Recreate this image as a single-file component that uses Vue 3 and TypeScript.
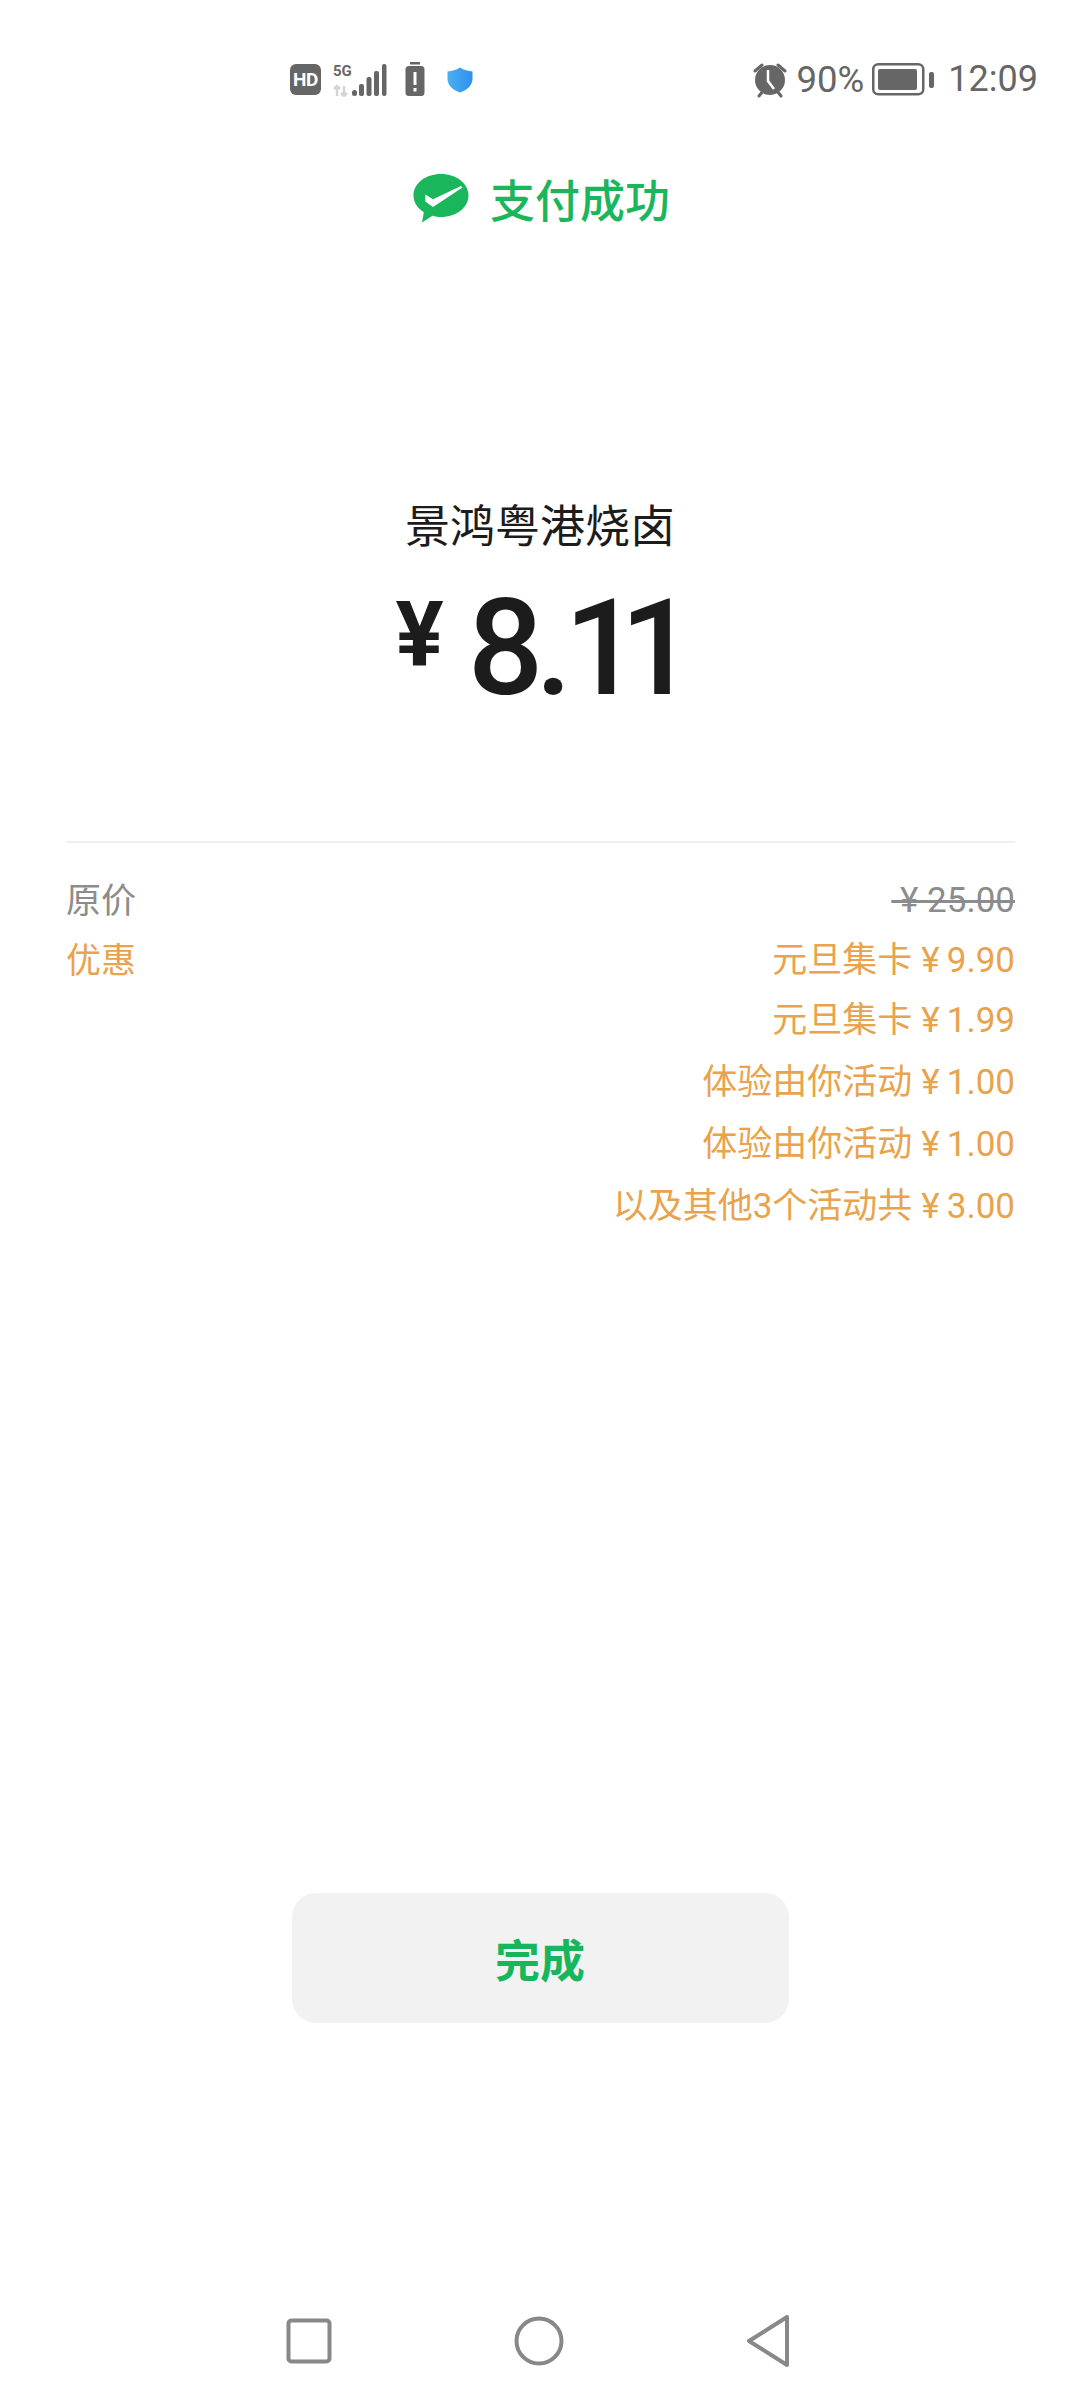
<script setup lang="ts">
interface Discount { name: string; amount: string; cls?: string }
const discounts: Discount[] = [
  { name: '元旦集卡', amount: '9.90' },
  { name: '元旦集卡', amount: '1.99' },
  { name: '体验由你活动', amount: '1.00', cls: 'loose' },
  { name: '体验由你活动', amount: '1.00', cls: 'loose' },
  { name: '以及其他3个活动共', amount: '3.00', cls: 'loose' },
]
</script>

<template>
  <div class="page">
    <header class="status">
      <div class="status-left">
        <span class="hd">HD</span>
        <svg class="signal" width="55" height="35" viewBox="0 0 55 35">
          <text x="0" y="14" class="five-g">5G</text>
          <path d="M4 24v10M1 27l3-3 3 3" stroke="#d4d4d4" stroke-width="2.5" fill="none" />
          <path d="M11 24v10M8 31l3 3 3-3" stroke="#d4d4d4" stroke-width="2.5" fill="none" />
          <rect x="19" y="28" width="5" height="6" rx="2.5" fill="#666" />
          <rect x="26" y="22" width="5" height="12" rx="2" fill="#666" />
          <rect x="33.500" y="15" width="5" height="19" rx="2" fill="#666" />
          <rect x="41" y="9" width="5" height="25" rx="2" fill="#666" />
          <rect x="49" y="2" width="4.500" height="32" rx="2" fill="#666" />
        </svg>
        <svg class="alert" width="20" height="35" viewBox="0 0 20 35">
          <rect x="5" y="0" width="10" height="2.500" fill="#666" />
          <rect x="0.500" y="4" width="19" height="30" rx="3.500" fill="#666" />
          <rect x="8.500" y="10" width="3" height="13" fill="#fff" />
          <rect x="8.500" y="26" width="3" height="3.500" fill="#fff" />
        </svg>
        <svg class="shield" width="26" height="26" viewBox="0 0 26 26">
          <defs>
            <linearGradient id="sg" x1="0" y1="0" x2="1" y2="0">
              <stop offset="0" stop-color="#4ab0f2" />
              <stop offset="1" stop-color="#2f8ff0" />
            </linearGradient>
          </defs>
          <path d="M13 0.500C17 3 21 4.200 25.500 4.500V12C25.500 18.500 19.500 23.500 13 25.500C6.500 23.500 0.500 18.500 0.500 12V4.500C5 4.200 9 3 13 0.500Z" fill="url(#sg)" />
        </svg>
      </div>
      <div class="status-right">
        <svg class="alarm" width="38" height="36" viewBox="0 0 38 36">
          <path d="M4 9L11 3M34 9L27 3" stroke="#666" stroke-width="3" fill="none" stroke-linecap="round" />
          <path d="M8 34l4-5M30 34l-4-5" stroke="#666" stroke-width="3" fill="none" stroke-linecap="round" />
          <circle cx="19" cy="18" r="15" fill="#666" />
          <path d="M17 8V19L23 27" stroke="#fff" stroke-width="2.500" fill="none" />
        </svg>
        <span class="pct">90%</span>
        <svg class="battery" width="62" height="33" viewBox="0 0 62 33">
          <rect x="1.250" y="1.250" width="50" height="30" rx="5" fill="none" stroke="#666" stroke-width="2.500" />
          <rect x="6" y="6" width="39" height="21" rx="2" fill="#666" />
          <rect x="57" y="9" width="5" height="16" rx="2" fill="#666" />
        </svg>
        <span class="time">12:09</span>
      </div>
    </header>

    <div class="title">
      <svg class="logo" width="56" height="50" viewBox="0 0 56 50">
        <path d="M28 0C43.500 0 55.500 9.500 55.500 21.500S43.500 43 28 43C25 43 22.300 42.700 19.500 41.800L9 48.500L10.800 38.200C4.300 34.200 0.500 28.200 0.500 21.500C0.500 9.500 12.500 0 28 0Z" fill="#1ab65c" />
        <path d="M12.300 20.500L20 25.300L48 12L49.500 13.500L20 33L12.300 27.500Z" fill="#fff" />
      </svg>
      <span class="title-text">支付成功</span>
    </div>

    <div class="merchant">景鸿粤港烧卤</div>
    <div class="amount">
      <span class="yen">¥</span><span class="value">8.<span class="ones">11</span></span>
    </div>

    <div class="divider"></div>

    <div class="details">
      <div class="row grey">
        <span>原价</span>
        <span class="strike">&nbsp;¥&nbsp;25.00</span>
      </div>
      <div class="row orange">
        <span>优惠</span>
        <div class="list">
          <div v-for="(d, i) in discounts" :key="i" class="item" :class="d.cls">
            {{ d.name }}<span class="cny">¥</span>{{ d.amount }}
          </div>
        </div>
      </div>
    </div>

    <button class="done">完成</button>

    <nav class="nav">
      <svg width="46" height="46" viewBox="0 0 46 46">
        <rect x="2.500" y="2.500" width="41" height="41" rx="3" fill="none" stroke="#888" stroke-width="4" />
      </svg>
      <svg width="50" height="50" viewBox="0 0 50 50">
        <circle cx="25" cy="25" r="22.500" fill="none" stroke="#888" stroke-width="4" />
      </svg>
      <svg width="44" height="54" viewBox="0 0 44 54">
        <path d="M41 3L3 27L41 51Z" fill="none" stroke="#888" stroke-width="4" stroke-linejoin="round" />
      </svg>
    </nav>
  </div>
</template>

<style>
html, body { margin: 0; background: #fff; }
</style>

<style scoped>
.page {
  width: 1080px;
  height: 2400px;
  box-sizing: border-box;
  background: #fff;
  display: flex;
  flex-direction: column;
  font-family: "Roboto", "Noto Sans CJK SC", sans-serif;
  overflow: hidden;
}
.status {
  height: 35px;
  margin-top: 62px;
  padding: 0 42px 0 290px;
  display: flex;
  justify-content: space-between;
  align-items: center;
  color: #666;
}
.status-left, .status-right { display: flex; align-items: center; }
.hd {
  width: 31px;
  height: 31px;
  border-radius: 6px;
  background: #666;
  color: #fff;
  font: 700 19px/31px "Roboto", sans-serif;
  text-align: center;
  letter-spacing: -0.5px;
}
.signal { margin-left: 12px; }
.five-g { font: 700 15px "Roboto", sans-serif; fill: #666; }
.alert { margin-left: 17px; }
.shield { margin-left: 22px; }
.alarm { margin-right: 8px; }
.pct, .time { font-size: 36.500px; line-height: 35px; }
.battery { margin: 0 14px 0 8px; }
.time { font-size: 36px; }

.title {
  margin-top: 77px;
  display: flex;
  justify-content: center;
  align-items: center;
  gap: 21px;
  height: 50px;
  padding-left: 3px;
}
.title-text {
  font: 500 45px/50px "Noto Sans CJK SC", sans-serif;
  color: #1ab65c;
}
.merchant {
  margin-top: 273px;
  text-align: center;
  font: 400 45px/54px "Noto Sans CJK SC", sans-serif;
  color: #1c1c1c;
}
.amount {
  margin-top: 28px;
  height: 140px;
  padding-left: 8px;
  display: flex;
  justify-content: center;
  align-items: flex-start;
  color: #1c1c1c;
}
.yen {
  font: 700 90px/114px "Roboto", sans-serif;
  margin-right: 24px;
}
.value {
  font: 500 133px/140px "Roboto", sans-serif;
  letter-spacing: -8px;
}
.ones { letter-spacing: -20px; margin-right: 17px; }
.divider {
  margin: 122px 65px 0 66px;
  height: 2px;
  background: #efefef;
}
.details {
  margin: 25px 65px 0 66px;
  font: 400 35px/60px "Noto Sans CJK SC", sans-serif;
}
.row { display: flex; justify-content: space-between; }
.grey { color: #8c8c8c; height: 60px; }
.orange { color: #e8a34c; }
.strike {
  text-decoration: line-through;
  font-family: "Roboto", "Noto Sans CJK SC", sans-serif;
  padding-top: 3px;
}
.list {
  text-align: right;
  font-family: "Roboto", "Noto Sans CJK SC", sans-serif;
  padding-top: 3px;
}
.cny { margin: 0 7px 0 9px; font-family: "Roboto", sans-serif; }
.item.loose { margin-top: 2px; }
.done {
  display: block;
  margin: auto auto 291px;
  width: 497px;
  height: 130px;
  border: 0;
  border-radius: 24px;
  background: #f2f2f2;
  color: #17b65c;
  font: 700 45px/130px "Noto Sans CJK SC", sans-serif;
}
.nav {
  padding: 0 290px 32px 286px;
  display: flex;
  justify-content: space-between;
  align-items: center;
}
</style>
